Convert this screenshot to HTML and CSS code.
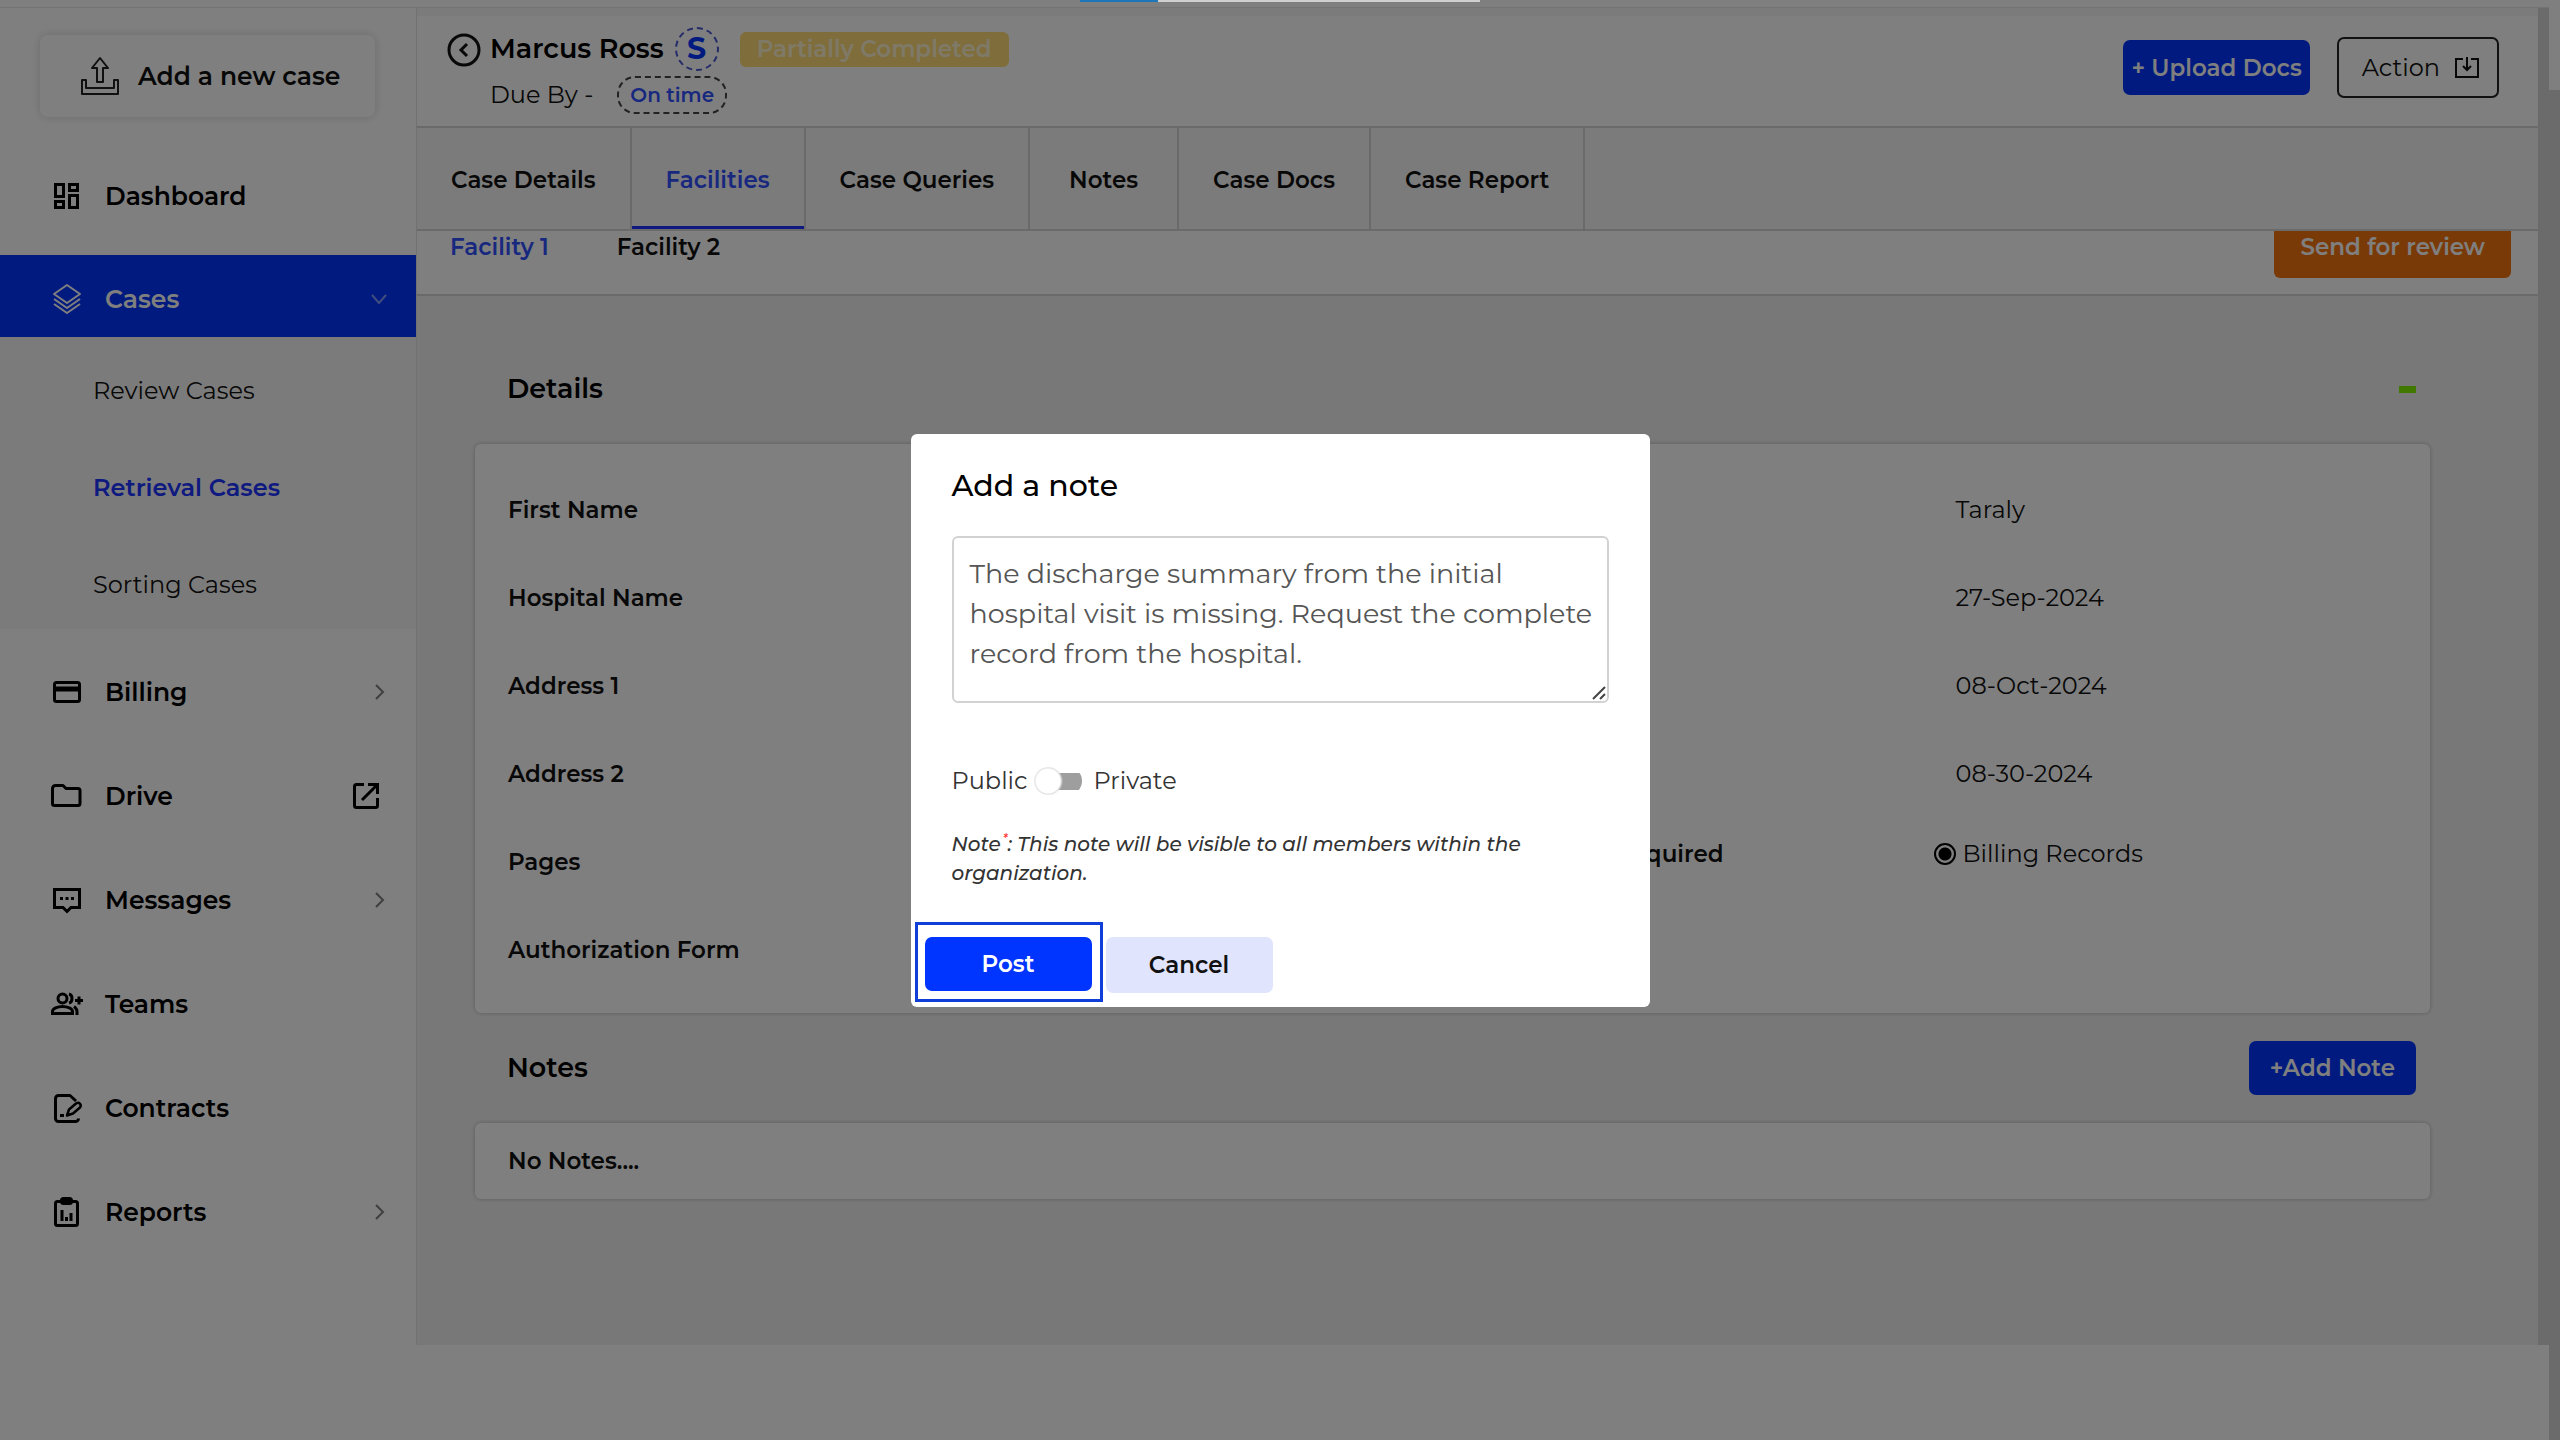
FILE: index.html
```
<!DOCTYPE html>
<html lang="en">
  <head>
    <meta charset="UTF-8" />
    <meta name="viewport" content="width=device-width, initial-scale=1.0" />
    <title>Marcus Ross - Facilities</title>
    <link rel="stylesheet" href="styles.css">
  </head>
  <body>
    <div class="window">
      <div class="page">
        <div class="topbar"></div>
        <div class="layout">
          <!-- Sidebar -->
          <aside class="sidebar">
            <button class="new-case" type="button">
              <svg class="new-case-icon" viewBox="0 0 40 40" fill="none" stroke="#222" stroke-width="2" stroke-linejoin="round">
                <path d="M17 26V12h-5L20 2l8 10h-5v14z" />
                <path d="M6 24H2v14h36V24h-4v8H6z" />
              </svg>
              Add a new case
            </button>

            <nav class="nav">
              <a class="nav-item first" href="#">
                <svg class="icon" viewBox="0 0 32 32" fill="none" stroke="currentColor" stroke-width="3">
                  <path d="M4.500 4.500h8v12h-8zM18.500 4.500h8v6h-8zM4.500 21.500h8v6h-8zM18.500 15.500h8v12h-8z" />
                </svg>
                Dashboard
              </a>
              <a class="nav-item active" href="#">
                <svg class="icon" viewBox="0 0 32 32" fill="none" stroke="currentColor" stroke-width="2" stroke-linejoin="round">
                  <path d="M16 2l13 9-13 9-13-9z" />
                  <path d="M3 16l13 9 13-9M3 21l13 9 13-9" />
                </svg>
                Cases
                <svg class="chevron" viewBox="0 0 20 20" fill="none" stroke="currentColor" stroke-width="2"><path d="M3 6l7 8 7-8" /></svg>
              </a>
              <div class="subnav">
                <a href="#">Review Cases</a>
                <a class="current" href="#">Retrieval Cases</a>
                <a href="#">Sorting Cases</a>
              </div>
              <a class="nav-item" href="#">
                <svg class="icon" viewBox="0 0 32 32" fill="none" stroke="currentColor" stroke-width="3">
                  <rect x="3.500" y="6.500" width="25" height="19" rx="2" />
                  <path d="M3 13h26" stroke-width="5" />
                </svg>
                Billing
                <svg class="chevron" viewBox="0 0 20 20" fill="none" stroke="currentColor" stroke-width="2"><path d="M7 3l7 7-7 7" /></svg>
              </a>
              <a class="nav-item" href="#">
                <svg class="icon" viewBox="0 0 32 32" fill="none" stroke="currentColor" stroke-width="3" stroke-linejoin="round">
                  <path d="M1.500 8.500a3 3 0 0 1 3-3H12l3 3h12a2 2 0 0 1 2 2v13a2 2 0 0 1-2 2H3.500a2 2 0 0 1-2-2z" />
                </svg>
                Drive
                <svg class="external" viewBox="0 0 32 32" fill="none" stroke="currentColor" stroke-width="3">
                  <path d="M14 4.500H6.500a2 2 0 0 0-2 2v19a2 2 0 0 0 2 2h19a2 2 0 0 0 2-2V18M18 4.500h9.500V14M27 5L12 20" />
                </svg>
              </a>
              <a class="nav-item" href="#">
                <svg class="icon" viewBox="0 0 32 32" fill="none" stroke="currentColor" stroke-width="3">
                  <path d="M3.500 5.500h25v18H20l-4 4-4-4H3.500z" />
                  <path d="M9 14.500h3M14.500 14.500h3M20 14.500h3" />
                </svg>
                Messages
                <svg class="chevron" viewBox="0 0 20 20" fill="none" stroke="currentColor" stroke-width="2"><path d="M7 3l7 7-7 7" /></svg>
              </a>
              <a class="nav-item" href="#">
                <svg class="icon" viewBox="0 0 32 32" fill="none" stroke="currentColor" stroke-width="3">
                  <circle cx="11.500" cy="10.500" r="4.500" />
                  <path d="M1.500 25.500v-2c0-3 5-5 10-5s10 2 10 5v2z" />
                  <path d="M18 6c4 1 4 8 0 9M23 18.500c2 1.500 3 3 3 5V27" />
                  <path d="M24 12.500h8M28 8.500v8" />
                </svg>
                Teams
              </a>
              <a class="nav-item" href="#">
                <svg class="icon" viewBox="0 0 32 32" fill="none" stroke="currentColor" stroke-width="3" stroke-linejoin="round">
                  <path d="M25 9l-6-5.500H7.500a3 3 0 0 0-3 3v20a3 3 0 0 0 3 3h17a3 3 0 0 0 3-3" />
                  <path d="M16 23.500l2-6 7-6c3-2 6 1 4 4l-7 6z" stroke-width="2.500" />
                  <path d="M9 23.500h4" />
                </svg>
                Contracts
              </a>
              <a class="nav-item" href="#">
                <svg class="icon" viewBox="0 0 32 32" fill="none" stroke="currentColor" stroke-width="3">
                  <rect x="4.500" y="5.500" width="22" height="24" rx="2" />
                  <rect x="10.500" y="2.500" width="10" height="5" rx="2" />
                  <path d="M11 14v11M15.500 21v4M20 17v8" />
                </svg>
                Reports
                <svg class="chevron" viewBox="0 0 20 20" fill="none" stroke="currentColor" stroke-width="2"><path d="M7 3l7 7-7 7" /></svg>
              </a>
            </nav>
          </aside>

          <!-- Case -->
          <main class="main">
            <header class="case-header">
              <a class="back" href="#" aria-label="Back">
                <svg viewBox="0 0 36 36" fill="none" stroke="currentColor" stroke-width="3">
                  <circle cx="18" cy="18" r="15" />
                  <path d="M21 12l-6 6 6 6" />
                </svg>
              </a>
              <div class="case-info">
                <div class="case-line">
                  <h1>Marcus Ross</h1>
                  <span class="case-type">S</span>
                  <span class="case-status">Partially Completed</span>
                </div>
                <div class="case-line due">
                  <span>Due By -</span>
                  <span class="due-pill">On time</span>
                </div>
              </div>
              <div class="case-actions">
                <button class="btn btn-primary upload" type="button">+ Upload Docs</button>
                <button class="btn btn-outline" type="button">
                  Action
                  <svg class="action-icon" viewBox="0 0 26 22" fill="none" stroke="currentColor" stroke-width="2">
                    <path d="M9 2H2v18h22V2h-7M13 0v13M9 9l4 4 4-4" />
                  </svg>
                </button>
              </div>
            </header>

            <nav class="tabs">
              <a href="#">Case Details</a>
              <a class="selected" href="#">Facilities</a>
              <a href="#">Case Queries</a>
              <a class="wide" href="#">Notes</a>
              <a href="#">Case Docs</a>
              <a href="#">Case Report</a>
            </nav>

            <div class="facility-bar">
              <a class="selected" href="#">Facility 1</a>
              <a href="#">Facility 2</a>
              <button class="btn-review" type="button">Send for review</button>
            </div>

            <div class="content">
              <div class="section-head">
                <h2>Details</h2>
                <button class="collapse" type="button" aria-label="Collapse details"></button>
              </div>
              <section class="card details">
                <ul class="labels">
                  <li>First Name</li>
                  <li>Hospital Name</li>
                  <li>Address 1</li>
                  <li>Address 2</li>
                  <li>Pages</li>
                  <li>Authorization Form</li>
                </ul>
                <ul class="values">
                  <li>Taraly</li>
                  <li>27-Sep-2024</li>
                  <li>08-Oct-2024</li>
                  <li>08-30-2024</li>
                  <li class="record-row">
                    <span class="record-title">Record Required</span>
                    <input type="radio" id="billing-records" name="record" checked />
                    <label for="billing-records">Billing Records</label>
                  </li>
                </ul>
              </section>

              <div class="section-head notes-head">
                <h2>Notes</h2>
                <button class="btn btn-primary add-note" type="button">+Add Note</button>
              </div>
              <section class="card notes">No Notes....</section>
            </div>
          </main>
          <div class="inner-scroll"></div>
        </div>
      </div>
      <div class="outer-scroll"></div>
    </div>

    <!-- Add note dialog -->
    <div class="overlay">
      <form class="modal" role="dialog" aria-labelledby="note-title">
        <h2 id="note-title">Add a note</h2>
        <div class="note-box">
          <textarea aria-labelledby="note-title">The discharge summary from the initial hospital visit is missing. Request the complete record from the hospital.</textarea>
          <svg class="grip" viewBox="0 0 16 16" fill="none" stroke="#444" stroke-width="2"><path d="M2 14L14 2M9 14l5-5" /></svg>
        </div>
        <div class="visibility">
          <span>Public</span>
          <input class="switch" type="checkbox" id="private" />
          <label for="private">Private</label>
        </div>
        <p class="hint">Note<span class="star">*</span>: This note will be visible to all members within the organization.</p>
        <div class="modal-actions">
          <div class="post-frame">
            <button class="btn btn-post" type="button">Post</button>
          </div>
          <button class="btn btn-cancel" type="button">Cancel</button>
        </div>
      </form>
    </div>
    <div class="progress"></div>
  </body>
</html>
```
FILE: styles.css
```
* {
    box-sizing: border-box;
}
body {
    margin: 0;
    background-color: #fff;
    color: #111;
    font-family: Montserrat, "Noto Sans", sans-serif;
    font-size: 24px;
    line-height: 30px;
    font-weight: 400;
}
a {
    color: inherit;
    text-decoration: none;
}
button,
textarea {
    font: inherit;
    color: inherit;
}
h1,
h2,
p,
ul {
    margin: 0;
    padding: 0;
    list-style: none;
}
h1,
h2 {
    font-size: 27px;
    font-weight: 600;
    color: #000;
}
.window {
    display: flex;
    min-height: 100vh;
}
.page {
    flex: 1;
}
.outer-scroll {
    width: 11px;
    background: linear-gradient(#fff 90px, #d6d6d6 90px);
}
.topbar {
    height: 8px;
    border-bottom: 1px solid #e6e6e6;
}
.layout {
    display: flex;
    align-items: stretch;
}
.inner-scroll {
    width: 11px;
    background-color: #d6d6d6;
}

/* Sidebar */
.sidebar {
    width: 417px;
    border-right: 1px solid #e2e2e8;
    padding-top: 27px;
}
.new-case {
    display: flex;
    align-items: center;
    gap: 18px;
    width: 335px;
    height: 82px;
    margin: 0 40px 38px;
    padding: 0 40px;
    border: none;
    border-radius: 8px;
    background-color: #fff;
    box-shadow: 0 0 10px rgba(0, 0, 0, 0.16);
    font-size: 25px;
    font-weight: 600;
    white-space: nowrap;
}
.new-case-icon {
    width: 40px;
    height: 40px;
    flex: none;
}
.nav-item {
    display: flex;
    align-items: center;
    gap: 22px;
    height: 82px;
    margin-bottom: 22px;
    padding: 0 27px 0 51px;
    font-size: 25px;
    font-weight: 600;
    color: #000;
}
.nav-item.first {
    margin-bottom: 18px;
}
.nav-item.active {
    margin: 0;
    padding-top: 6px;
    background-color: #0034ff;
    color: #fff;
}
.icon {
    width: 32px;
    height: 32px;
    flex: none;
}
.chevron {
    width: 20px;
    height: 20px;
    margin-left: auto;
    opacity: 0.5;
}
.external {
    width: 32px;
    height: 32px;
    margin: 0 7px 0 auto;
}
.subnav {
    display: flex;
    flex-direction: column;
    gap: 67px;
    margin-bottom: 22px;
    padding: 39px 0 29px 93px;
    background-color: #f6f6f6;
}
.subnav .current {
    color: #1c34ff;
    font-weight: 600;
}

/* Case header */
.main {
    flex: 1;
    display: flex;
    flex-direction: column;
    background-color: #f1f1f1;
}
.case-header {
    display: flex;
    height: 120px;
    padding: 8px 39px 0 29px;
    border-top: 8px solid #f6f6f6;
    border-bottom: 2px solid #d4d4d4;
    background-color: #fff;
}
.back {
    width: 36px;
    height: 36px;
    margin-top: 8px;
}
.case-info {
    margin: 2px 0 0 8px;
}
.case-line {
    display: flex;
    align-items: center;
    height: 46px;
}
.case-line.due {
    gap: 24px;
}
.case-type {
    width: 44px;
    height: 44px;
    margin: 0 21px 0 11px;
    border: 2px dashed #4656d0;
    border-radius: 50%;
    color: #0034ff;
    font-size: 30px;
    font-weight: 700;
    line-height: 40px;
    text-align: center;
}
.case-status {
    padding: 2px 17px 3px;
    border-radius: 6px;
    background-color: #ffdb78;
    color: #fff4d0;
    font-size: 23px;
    font-weight: 600;
}
.due-pill {
    padding: 2px 11px;
    border: 2px dashed #444;
    border-radius: 18px;
    color: #3350ff;
    font-size: 20px;
    font-weight: 600;
}
.case-actions {
    display: flex;
    align-items: flex-start;
    gap: 27px;
    margin-left: auto;
}
.btn {
    border: none;
    border-radius: 7px;
    white-space: nowrap;
}
.btn-primary {
    background-color: #0034ff;
    color: #fff;
    font-size: 23px;
    font-weight: 600;
}
.upload {
    height: 55px;
    margin-top: 16px;
    padding: 0 8px;
}
.btn-outline {
    display: flex;
    align-items: center;
    gap: 14px;
    height: 61px;
    margin-top: 13px;
    padding: 0 17px 0 23px;
    border: 2px solid #222;
    background-color: #fff;
}
.action-icon {
    width: 26px;
    height: 22px;
}

/* Tabs */
.tabs,
.facility-bar,
.labels,
.notes {
    font-size: 23px;
    font-weight: 600;
}
.tabs {
    display: flex;
    border-bottom: 2px solid #d4d4d4;
    background-color: #f6f6f6;
}
.tabs a {
    padding: 37px 34px 34px;
    border-right: 2px solid #d4d4d4;
}
.tabs a.wide {
    padding: 37px 39px 34px;
}
.tabs .selected {
    box-shadow: inset 0 -3px #1c34ff;
    color: #3350ff;
}
.facility-bar {
    display: flex;
    gap: 68px;
    height: 65px;
    padding: 0 27px 0 33px;
    border-bottom: 2px solid #d4d4d4;
    background-color: #fff;
}
.facility-bar a {
    padding-top: 1px;
}
.facility-bar .selected {
    color: #3350ff;
}
.btn-review {
    height: 47px;
    margin-left: auto;
    padding: 0 26px 15px;
    border: none;
    border-radius: 0 0 6px 6px;
    background-color: #f5740f;
    color: #fff;
}

/* Details */
.content {
    padding: 60px 108px 146px 58px;
}
.section-head {
    display: flex;
    align-items: center;
    justify-content: space-between;
    height: 66px;
    margin-bottom: 22px;
    padding: 0 14px 0 32px;
}
.collapse {
    width: 17px;
    height: 7px;
    padding: 0;
    border: none;
    background-color: #80f000;
}
.card {
    border-radius: 6px;
    background-color: #fff;
    box-shadow: 0 0 4px rgba(0, 0, 0, 0.25);
}
.details {
    display: grid;
    grid-template-columns: 3fr 1fr;
    padding: 22px 0 19px 33px;
}
.details li {
    display: flex;
    align-items: center;
    height: 88px;
}
.values {
    padding-left: 6px;
}
/* The record row starts left of the values column so its title sits beside them */
.details .record-row {
    width: max-content;
    height: 72px;
    margin-left: -432px;
}
.record-title {
    width: 200px;
    margin-right: 210px;
    font-size: 23px;
    font-weight: 600;
    text-align: right;
    white-space: nowrap;
}
.record-row input {
    appearance: none;
    width: 22px;
    height: 22px;
    margin: 0 7px 0 0;
    border: 2px solid #000;
    border-radius: 50%;
    background: radial-gradient(#000 6px, #fff 7px);
}
.notes-head {
    height: 54px;
    margin: 28px 0;
}
.add-note {
    height: 54px;
    padding: 0 21px;
}
.notes {
    padding: 23px 33px;
}

/* Dialog */
.overlay {
    position: fixed;
    inset: 0;
    display: flex;
    align-items: center;
    justify-content: center;
    background-color: rgba(0, 0, 0, 0.5);
}
.modal {
    width: 739px;
    padding: 34px 41px 5px;
    border-radius: 6px;
    background-color: #fff;
    color: #333;
}
.modal h2 {
    font-size: 30px;
    font-weight: 500;
    line-height: 36px;
}
.note-box {
    position: relative;
    margin: 32px 0 63px;
}
.modal textarea {
    display: block;
    width: 100%;
    height: 167px;
    padding: 16px 8px 14px 16px;
    border: 2px solid #d2d2d2;
    border-radius: 6px;
    color: #555;
    font-size: 27px;
    line-height: 40px;
    outline: none;
    resize: none;
}
.grip {
    position: absolute;
    right: 2px;
    bottom: 2px;
    width: 16px;
    height: 16px;
}
.visibility {
    display: flex;
    align-items: center;
    margin-bottom: 34px;
}
.switch {
    appearance: none;
    width: 48px;
    height: 28px;
    margin: 0 12px 0 6px;
    background:
        radial-gradient(circle at 14px 14px, #fff 12px, #e2e2e2 13px, transparent 15px),
        linear-gradient(#9e9e9e, #9e9e9e) 14px 6px / 100% 17px no-repeat;
    border-radius: 14px;
}
.hint {
    font-size: 20px;
    font-style: italic;
    font-weight: 500;
    line-height: 29px;
}
.star {
    display: inline-block;
    padding: 0 0 0 2px;
    color: #f22;
    font-size: 12px;
    line-height: 12px;
    vertical-align: 8px;
}
.modal-actions {
    display: flex;
    align-items: flex-end;
    gap: 3px;
    margin: 34px 0 0 -37px;
}
.post-frame {
    padding: 12px 8px 8px 7px;
    border: 3px solid #0f3fd8;
}
.btn-post,
.btn-cancel {
    display: block;
    width: 167px;
    height: 54px;
    background-color: #0034ff;
    color: #fff;
    font-size: 23px;
    font-weight: 600;
}
.btn-cancel {
    height: 56px;
    margin-bottom: 9px;
    background-color: #e0e4fd;
    color: #111;
}

/* Page load strip at the very top */
.progress {
    position: fixed;
    top: 0;
    left: 1080px;
    width: 400px;
    height: 2px;
    background: linear-gradient(90deg, #1c76b8 78px, #cfcfcf 78px);
}
```
